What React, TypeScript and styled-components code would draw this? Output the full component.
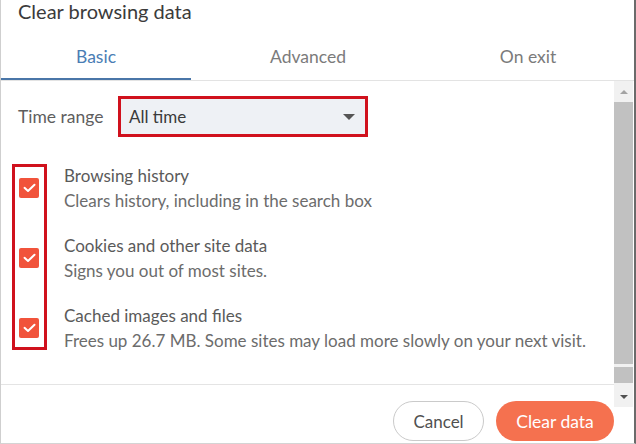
import styled, { createGlobalStyle } from 'styled-components';

const GlobalStyle = createGlobalStyle`
  html, body {
    margin: 0;
    padding: 0;
    background: #ffffff;
  }
  body {
    font-family: Lato, "Open Sans", Arial, sans-serif;
  }
`;

const Dialog = styled.div`
  width: 636px;
  height: 444px;
  box-sizing: border-box;
  border-left: 1px solid #cfcfcf;
  border-right: 2px solid #6b6b6b;
  border-bottom: 1px solid #d4d4d4;
  display: flex;
  flex-direction: column;
  background: #fff;
  overflow: hidden;
`;

const Title = styled.div`
  height: 28px;
  line-height: 23px;
  padding-left: 17px;
  font-size: 20px;
  color: #3b3b3b;
`;

const TabBar = styled.div`
  display: flex;
  height: 53px;
  border-bottom: 1px solid #e3e3e3;
  box-sizing: border-box;
`;

const Tab = styled.div<{ active?: boolean; w: number }>`
  width: ${({ w }) => w}px;
  box-sizing: border-box;
  padding-top: 6px;
  display: flex;
  align-items: center;
  justify-content: center;
  font-size: 17.5px;
  color: ${({ active }) => (active ? '#4a7db4' : '#7b7b7b')};
  border-bottom: 2px solid ${({ active }) => (active ? '#4a76a8' : 'transparent')};
`;

const Body = styled.div`
  flex: 1;
  display: flex;
`;

const Main = styled.div`
  flex: 1;
  display: flex;
  flex-direction: column;
`;

const Content = styled.div`
  height: 288px;
  border-bottom: 1px solid #e4e4e4;
  padding-top: 15px;
  box-sizing: content-box;
`;

const RangeRow = styled.div`
  display: flex;
  align-items: center;
  padding-left: 17px;
`;

const RangeLabel = styled.div`
  width: 100px;
  font-size: 17.5px;
  color: #5e5e5e;
`;

const Select = styled.div`
  width: 250px;
  height: 41px;
  box-sizing: border-box;
  border: 3px solid #d0111d;
  background: #eef1f5;
  display: flex;
  align-items: center;
  justify-content: space-between;
  padding: 0 10px 0 8px;
  font-size: 17px;
  color: #3a3a3a;
`;

const Caret = styled.span`
  width: 0;
  height: 0;
  border-left: 6px solid transparent;
  border-right: 6px solid transparent;
  border-top: 6px solid #555;
`;

const Options = styled.div`
  position: relative;
  margin-top: 16px;
`;

const Highlight = styled.div`
  position: absolute;
  left: 11px;
  top: 11px;
  width: 35px;
  height: 186px;
  box-sizing: border-box;
  border: 3px solid #d0111d;
  pointer-events: none;
`;

const OptionRow = styled.div`
  height: 70px;
  display: flex;
  align-items: center;
  padding-left: 18px;
  gap: 25px;
`;

const Check = styled.div`
  width: 20px;
  height: 20px;
  border-radius: 2px;
  background: #f1533b;
  display: flex;
  align-items: center;
  justify-content: center;
`;

const OptionText = styled.div`
  display: flex;
  flex-direction: column;
  font-size: 17px;
  line-height: 25px;
`;

const OptionTitle = styled.span`
  color: #5a5a5a;
`;

const OptionSub = styled.span`
  color: #6c6c6c;
`;

const Footer = styled.div`
  flex: 1;
  display: flex;
  justify-content: flex-end;
  align-items: flex-end;
  gap: 12px;
  padding-bottom: 2px;
`;

const Button = styled.button<{ primary?: boolean }>`
  height: 40px;
  border-radius: 20px;
  font-family: inherit;
  font-size: ${({ primary }) => (primary ? '17.5px' : '17px')};
  padding: 0;
  width: ${({ primary }) => (primary ? '118px' : '91px')};
  border: ${({ primary }) => (primary ? 'none' : '1px solid #cacaca')};
  background: ${({ primary }) => (primary ? '#f5714f' : '#fff')};
  color: ${({ primary }) => (primary ? '#fff' : '#505050')};
`;

const ScrollTrack = styled.div`
  width: 19px;
  height: 326px;
  margin-right: 1px;
  background: #f1f1f1;
  display: flex;
  flex-direction: column;
  align-items: stretch;
`;

const Arrow = styled.div<{ down?: boolean }>`
  height: 21px;
  display: flex;
  align-items: center;
  justify-content: center;
  &::after {
    content: '';
    border-left: 4px solid transparent;
    border-right: 4px solid transparent;
    ${({ down }) => (down ? 'border-top: 4px solid #505050;' : 'border-bottom: 4px solid #a3a3a3;')}
  }
`;

const Thumb = styled.div<{ h: number }>`
  height: ${({ h }) => h}px;
  background: #c1c1c1;
  margin-bottom: 3px;
`;

const options = [
  { title: 'Browsing history', sub: 'Clears history, including in the search box' },
  { title: 'Cookies and other site data', sub: 'Signs you out of most sites.' },
  { title: 'Cached images and files', sub: 'Frees up 26.7 MB. Some sites may load more slowly on your next visit.' },
];

function CheckMark() {
  return (
    <svg width="13" height="10" viewBox="0 0 13 10">
      <polyline points="1.5,4.8 5,8 11.5,1.8" fill="none" stroke="#fff" strokeWidth="2" strokeLinecap="round" strokeLinejoin="round" />
    </svg>
  );
}

export default function App() {
  return (
    <>
      <GlobalStyle />
      <Dialog>
        <Title>Clear browsing data</Title>
        <TabBar>
          <Tab active w={190}>Basic</Tab>
          <Tab w={234}>Advanced</Tab>
          <Tab w={206}>On exit</Tab>
        </TabBar>
        <Body>
          <Main>
            <Content>
              <RangeRow>
                <RangeLabel>Time range</RangeLabel>
                <Select>
                  All time
                  <Caret />
                </Select>
              </RangeRow>
              <Options>
                <Highlight />
                {options.map((o) => (
                  <OptionRow key={o.title}>
                    <Check>
                      <CheckMark />
                    </Check>
                    <OptionText>
                      <OptionTitle>{o.title}</OptionTitle>
                      <OptionSub>{o.sub}</OptionSub>
                    </OptionText>
                  </OptionRow>
                ))}
              </Options>
            </Content>
            <Footer>
              <Button>Cancel</Button>
              <Button primary>Clear data</Button>
            </Footer>
          </Main>
          <ScrollTrack>
            <Arrow />
            <Thumb h={262} />
            <Thumb h={16} />
            <Arrow down />
          </ScrollTrack>
        </Body>
      </Dialog>
    </>
  );
}
